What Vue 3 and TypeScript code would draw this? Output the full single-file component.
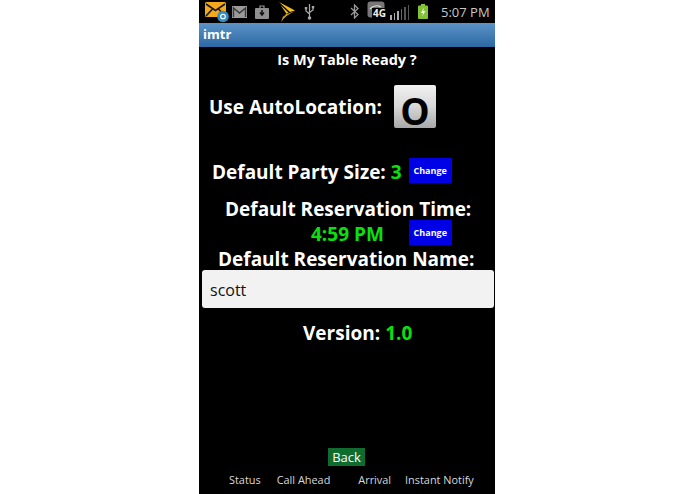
<script setup lang="ts">
const tabs: { label: string; cls: string }[] = [
  { label: 'Status', cls: 't1' },
  { label: 'Call Ahead', cls: 't2' },
  { label: 'Arrival', cls: 't3' },
  { label: 'Instant Notify', cls: 't4' },
]
</script>

<template>
  <div class="page">
    <div class="phone">
      <div class="status">
        <svg class="ic-mail" width="24" height="22" viewBox="0 0 24 22">
          <rect x="0" y="1" width="21" height="15" rx="1.5" fill="#f5a81c" />
          <path d="M1 3l9.500 6.500L20 3M1 15l6.500-7M20 15l-6.500-7" fill="none" stroke="#1a1a1a" stroke-width="1.700" />
          <circle cx="18" cy="15.500" r="5.800" fill="#2f8fc4" />
          <circle cx="18" cy="15.500" r="2.300" fill="none" stroke="#fff" stroke-width="1.100" />
        </svg>
        <svg class="ic-gmail" width="15" height="12" viewBox="0 0 15 12">
          <rect width="15" height="12" fill="#9a9a9a" />
          <path d="M1.500 11V2l6 5 6-5v9" fill="none" stroke="#3a3a3a" stroke-width="1.400" />
        </svg>
        <svg class="ic-bag" width="14" height="14" viewBox="0 0 14 14">
          <path d="M5 3V1h4v2" fill="none" stroke="#999" stroke-width="1.200" />
          <rect y="3" width="14" height="11" rx="1" fill="#8f8f8f" />
          <path d="M7 5v4M5 7.500L7 10l2-2.500" fill="none" stroke="#111" stroke-width="1.500" />
        </svg>
        <svg class="ic-sprint" width="16" height="20" viewBox="0 0 16 20">
          <path d="M0 0L16 8.500 11 10 0 0Z" fill="#f0c020" />
          <path d="M1.500 3L9.500 10.500 7.500 12 1.500 3Z" fill="#e6b41c" />
          <path d="M16 9L6.500 12.500 2 20C5 15 10 12 16 9Z" fill="#d9a818" />
          <path d="M8 12.500L4 14.500 2 20 8 12.500Z" fill="#c99a14" />
        </svg>
        <svg class="ic-usb" width="11" height="17" viewBox="0 0 11 17">
          <path d="M5.500 1v14M5.500 11L2 8V6M5.500 9.500L9 7V5" fill="none" stroke="#aaa" stroke-width="1.200" />
          <circle cx="5.500" cy="15" r="1.800" fill="#aaa" />
          <rect x="0.800" y="4" width="2.400" height="2.400" fill="#aaa" />
          <rect x="7.800" y="3" width="2.400" height="2.400" fill="#aaa" />
        </svg>
        <svg class="ic-bt" width="9" height="15" viewBox="0 0 9 15">
          <path d="M1 4l7 6.500L4.500 14V1L8 4.500 1 11" fill="none" stroke="#999" stroke-width="1.300" />
        </svg>
        <div class="net">
          <svg class="net-bg" width="21" height="21" viewBox="0 0 21 21">
            <rect x="0.500" y="0.500" width="17" height="16" rx="3" fill="#777" />
            <path d="M3 8a9 9 0 0 1 11-2M5 10a5 5 0 0 1 7-1" fill="none" stroke="#ddd" stroke-width="1.300" />
          </svg>
          <span class="net-label">4G</span>
        </div>
        <div class="bars">
          <i class="b1"></i><i class="b2"></i><i class="b3"></i><i class="b4"></i><i class="b5"></i><i class="b6"></i>
        </div>
        <svg class="ic-batt" width="10" height="15" viewBox="0 0 10 15">
          <rect x="3" width="4" height="2" fill="#8bc83c" />
          <rect y="1.500" width="10" height="13.500" rx="1" fill="#82c234" />
          <path d="M6 3.500L3 9h2l-1 3.500L7.500 7H5.300Z" fill="#f4fbe4" />
        </svg>
        <span class="clock">5:07 PM</span>
      </div>

      <div class="titlebar">imtr</div>

      <div class="content">
        <div class="heading">Is My Table Ready ?</div>

        <div class="auto-row">
          <span class="lg">Use AutoLocation:</span>
          <button class="toggle">O</button>
        </div>

        <div class="party-row">
          <span class="lg">Default Party Size:</span>
          <span class="lg green three">3</span>
          <button class="change">Change</button>
        </div>

        <div class="lg time-label">Default Reservation Time:</div>
        <div class="time-row">
          <span class="lg green">4:59 PM</span>
          <button class="change">Change</button>
        </div>

        <div class="lg name-label">Default Reservation Name:</div>
        <div class="input">scott</div>

        <div class="version">
          <span class="lg">Version:</span>
          <span class="lg green">1.0</span>
        </div>

        <div class="spacer"></div>

        <div class="back-row"><button class="back">Back</button></div>
        <div class="tabs">
          <span v-for="t in tabs" :key="t.label" :class="['tab', t.cls]">{{ t.label }}</span>
        </div>
      </div>
    </div>
  </div>
</template>

<style>
html, body { margin: 0; background: #fff; }
</style>

<style scoped>
.page {
  width: 695px;
  height: 494px;
  display: flex;
  justify-content: center;
  background: #fff;
  overflow: hidden;
  font-family: "Open Sans", "Noto Sans", sans-serif;
}
.phone {
  width: 296px;
  height: 494px;
  margin-left: -1px;
  display: flex;
  flex-direction: column;
  background: #000;
}
.status {
  height: 23px;
  flex: none;
  display: flex;
  align-items: center;
  position: relative;
  background: #000;
}
.ic-mail { margin-left: 6px; margin-top: 1px; }
.ic-gmail { margin-left: 3px; margin-top: 0; }
.ic-bag { margin-left: 8px; }
.ic-sprint { margin-left: 10px; }
.ic-usb { margin-left: 9px; }
.ic-bt { margin-left: 35px; }
.net { width: 21px; height: 23px; margin-left: 8px; position: relative; }
.net-bg { position: absolute; left: 0; top: 1px; }
.net-label {
  position: absolute;
  left: 5px;
  top: 8px;
  background: #000;
  color: #eee;
  font-size: 10px;
  line-height: 11px;
  font-weight: 700;
  padding: 0 1px;
}
.bars {
  display: flex;
  align-items: flex-end;
  gap: 2px;
  height: 15px;
  margin-left: 2px;
  margin-top: 2px;
}
.bars i { display: block; width: 1.500px; background: #aaa; }
.b1 { height: 5px; }
.b2 { height: 7px; }
.b3 { height: 9px; }
.b4 { height: 11px; background: #666 !important; }
.b5 { height: 13px; background: #555 !important; }
.b6 { height: 15px; background: #555 !important; }
.ic-batt { margin-left: 9px; }
.clock {
  margin-left: 13px;
  color: #c9c9c9;
  font-size: 13px;
  font-weight: 400;
  white-space: nowrap;
}
.titlebar {
  height: 24px;
  flex: none;
  box-sizing: border-box;
  padding-left: 4px;
  background: linear-gradient(#5b93c6, #2d68a4);
  color: #fff;
  font-size: 13px;
  font-weight: 700;
  line-height: 23px;
}
.content {
  flex: 1;
  display: flex;
  flex-direction: column;
  min-height: 0;
  color: #fff;
}
.lg {
  font-size: 19px;
  font-weight: 700;
  line-height: 24px;
  white-space: nowrap;
}
.green { color: #0be00f; }
.heading {
  margin-top: 3px;
  height: 19px;
  text-align: center;
  font-size: 14.500px;
  font-weight: 700;
  line-height: 19px;
}
.auto-row {
  display: flex;
  align-items: center;
  margin-top: 15px;
  height: 44px;
  padding-left: 10px;
}
.auto-row .lg { margin-top: 2px; }
.toggle {
  width: 42px;
  height: 43px;
  margin-left: 12px;
  padding: 9px 0 0;
  border: none;
  border-radius: 2px;
  background: linear-gradient(#f1f1f1 0%, #d8d8d8 50%, #a8a8a8 100%);
  color: #000;
  font-family: inherit;
  font-size: 37px;
  font-weight: 700;
  line-height: 34px;
}
.party-row {
  display: flex;
  align-items: center;
  margin-top: 29px;
  height: 26px;
  padding-left: 13px;
}
.party-row .lg { margin-top: 3px; }
.three { margin-left: 5px; }
.change {
  width: 43px;
  height: 25px;
  padding: 0;
  border: none;
  background: #0000e6;
  color: #fff;
  font-family: inherit;
  font-size: 9px;
  font-weight: 700;
  line-height: 25px;
}
.party-row .change { margin-left: 7px; }
.time-label {
  margin-top: 14px;
  height: 24px;
  padding-left: 26px;
}
.time-row {
  display: flex;
  align-items: center;
  height: 25px;
  margin-top: -1px;
  padding-left: 112px;
}
.time-row .lg { margin-top: 2px; }
.time-row .change { margin-left: 25px; }
.name-label {
  height: 23px;
  margin-top: 2px;
  padding-left: 19px;
}
.input {
  height: 38px;
  box-sizing: border-box;
  margin: 0 0 0 3px;
  width: 292px;
  padding-left: 8px;
  border-radius: 3px;
  background: #f2f2f2;
  color: #111;
  font-size: 16px;
  line-height: 40px;
}
.version {
  display: flex;
  gap: 5px;
  margin-top: 13px;
  height: 24px;
  padding-left: 104px;
}
.spacer { flex: 1; }
.back-row { display: flex; padding-left: 129px; }
.back {
  width: 37px;
  height: 18px;
  padding: 0;
  border: none;
  background: #0f6b2e;
  color: #fff;
  font-family: inherit;
  font-size: 13px;
  line-height: 18px;
}
.tabs {
  display: flex;
  height: 19px;
  margin-top: 4px;
  margin-bottom: 5px;
  padding-left: 30px;
  align-items: center;
}
.tab {
  font-size: 10.900px;
  color: #d8d8d8;
  white-space: nowrap;
  line-height: 14px;
}
.t2 { margin-left: 16px; }
.t3 { margin-left: 28px; }
.t4 { margin-left: 14px; }
</style>
